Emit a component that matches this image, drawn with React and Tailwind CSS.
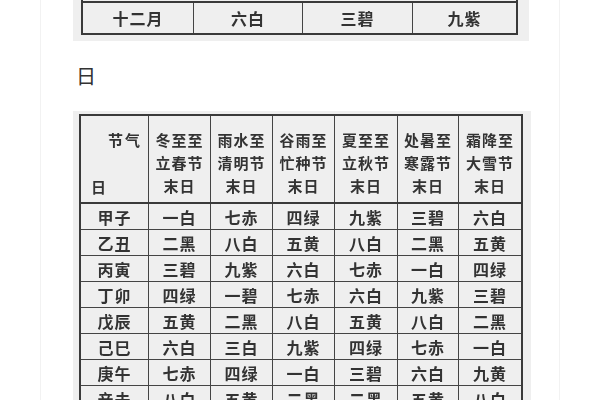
const HEAD = [
  ["冬至至", "立春节", "末日"],
  ["雨水至", "清明节", "末日"],
  ["谷雨至", "忙种节", "末日"],
  ["夏至至", "立秋节", "末日"],
  ["处暑至", "寒露节", "末日"],
  ["霜降至", "大雪节", "末日"],
];

const ROWS = [
  ["甲子", "一白", "七赤", "四绿", "九紫", "三碧", "六白"],
  ["乙丑", "二黑", "八白", "五黄", "八白", "二黑", "五黄"],
  ["丙寅", "三碧", "九紫", "六白", "七赤", "一白", "四绿"],
  ["丁卯", "四绿", "一碧", "七赤", "六白", "九紫", "三碧"],
  ["戊辰", "五黄", "二黑", "八白", "五黄", "八白", "二黑"],
  ["己巳", "六白", "三白", "九紫", "四绿", "七赤", "一白"],
  ["庚午", "七赤", "四绿", "一白", "三碧", "六白", "九黄"],
  ["辛未", "八白", "五黄", "二黑", "二黑", "五黄", "八白"],
];

const font = { fontFamily: '"Noto Sans CJK SC", "Noto Sans", sans-serif' };

export default function App() {
  return (
    <div className="h-[400px] w-[600px] overflow-hidden bg-white" style={font}>
      <div className="mx-[40px] h-full border-x border-[#f2f2f2] pl-[32px]">
        {/* scan 1: end of month table */}
        <div className="w-[456px] bg-[#efefef] pl-[8px] pr-[11px] pb-[6px]">
          <div className="blur-[0.3px] border-x-2 border-b-2 border-[#3a3a3a]">
            <div className="h-[3px] border-b-2 border-[#3a3a3a]" />
            <div className="grid h-[30px] grid-cols-[111px_109px_110px_1fr] text-[16px] font-bold text-[#333]">
              {["十二月", "六白", "三碧", "九紫"].map((t, i) => (
                <div
                  key={i}
                  className={`flex items-center justify-center tracking-[1px] ${
                    i < 3 ? "border-r border-[#444]" : ""
                  }`}
                >
                  {t}
                </div>
              ))}
            </div>
          </div>
        </div>

        <div className="pt-[22px] pl-[3px] text-[20px] leading-[26px] text-[#333]">日</div>

        {/* scan 2: day table */}
        <div className="mt-[22px] w-[458px] bg-[#efefef] pt-[3px] pl-[6px] pr-[8px]">
          <div className="blur-[0.3px] border-2 border-[#3a3a3a] text-[#333] font-bold">
            <div className="grid grid-cols-[68px_62px_62px_62px_63px_61px_1fr] border-b-2 border-[#3a3a3a]">
              <div className="relative h-[86px] border-r border-[#444]">
                <span className="absolute right-[6px] top-[12px] text-[15px] leading-[23px] tracking-[2px]">节气</span>
                <span className="absolute left-[10px] bottom-[4px] text-[15px] leading-[23px]">日</span>
              </div>
              {HEAD.map((h, i) => (
                <div
                  key={i}
                  className={`flex flex-col items-center pt-[12px] text-[15px] leading-[23px] tracking-[1px] ${
                    i < 5 ? "border-r border-[#444]" : ""
                  }`}
                >
                  {h.map((l, j) => (
                    <span key={j}>{l}</span>
                  ))}
                </div>
              ))}
            </div>
            {ROWS.map((r, ri) => (
              <div
                key={ri}
                className="grid h-[26px] grid-cols-[68px_62px_62px_62px_63px_61px_1fr] border-b border-[#444]"
              >
                {r.map((c, ci) => (
                  <div
                    key={ci}
                    className={`flex items-center justify-center text-[16px] tracking-[1px] ${
                      ci < 6 ? "border-r border-[#444]" : ""
                    }`}
                  >
                    {c}
                  </div>
                ))}
              </div>
            ))}
          </div>
        </div>
      </div>
    </div>
  );
}
